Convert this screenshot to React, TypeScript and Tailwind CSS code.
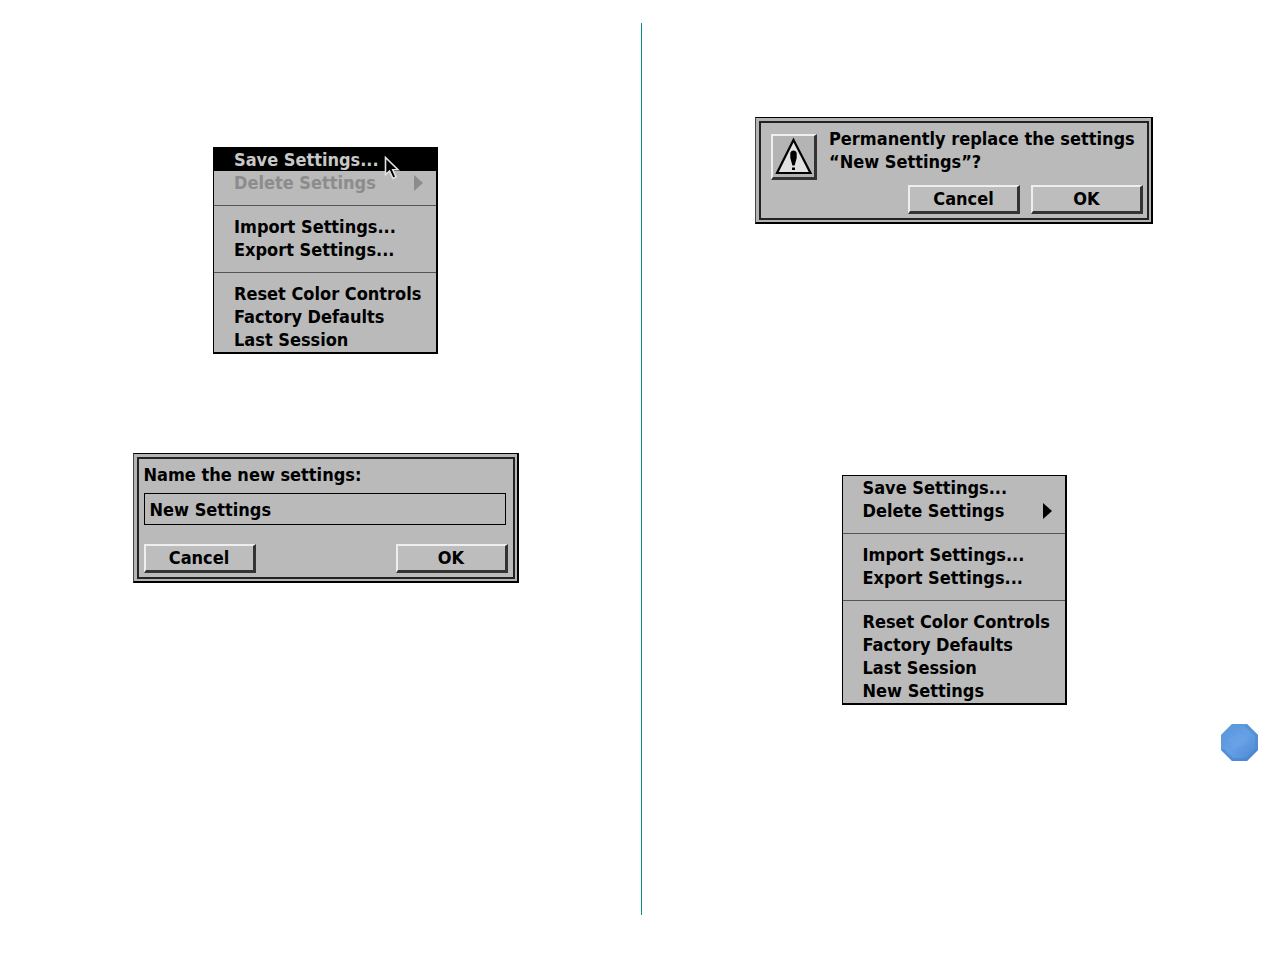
import type { ReactNode } from "react";

type Item = {
  label: string;
  selected?: boolean;
  disabled?: boolean;
  submenu?: boolean;
};

const fileItems: Item[] = [{ label: "Import Settings..." }, { label: "Export Settings..." }];
const presets: Item[] = [
  { label: "Reset Color Controls" },
  { label: "Factory Defaults" },
  { label: "Last Session" },
];

function Pointer() {
  return (
    <svg
      className="pointer-events-none absolute top-2 left-[170px] z-10"
      width="17"
      height="25"
      viewBox="0 0 17 25"
      aria-hidden="true"
    >
      <path
        d="M1.5 1.5V18.5L5.5 15L9 22.5L12 21L8.8 13.8H14Z"
        fill="#000"
        stroke="#e4e4e4"
        strokeWidth="1.6"
      />
    </svg>
  );
}

function Menu({ groups, children }: { groups: Item[][]; children?: ReactNode }) {
  return (
    <div
      role="menu"
      className="relative w-[225px] border-t border-r-2 border-b-2 border-l border-black bg-[#bababa] pb-px"
    >
      {groups.map((group, g) => (
        <div key={g} role="group">
          {g > 0 && (
            <div role="separator" className="pt-[11px] pb-[9px]">
              <div className="h-px bg-[#555]" />
            </div>
          )}
          {group.map((item) => (
            <button
              key={item.label}
              role="menuitem"
              type="button"
              disabled={item.disabled}
              className={`flex h-[23px] w-full items-center justify-between pr-[13px] pl-5 text-left leading-[23px] whitespace-nowrap ${
                item.selected ? "bg-black text-[#c8c8c8]" : item.disabled ? "text-[#8c8c8c]" : "text-black"
              }`}
            >
              {item.label}
              {item.submenu && (
                <svg width="9" height="16" viewBox="0 0 9 16" aria-hidden="true">
                  <path d="M0 0L9 8L0 16Z" fill="currentColor" />
                </svg>
              )}
            </button>
          ))}
        </div>
      ))}
      {children}
    </div>
  );
}

function Dialog({ className, children }: { className: string; children: ReactNode }) {
  return (
    <div
      role="dialog"
      className={`border-t border-r-2 border-b-2 border-l border-t-black border-r-black border-b-black border-l-[#444] bg-[#b4b4b4] pt-[3px] pr-0.5 pb-0.5 pl-[3px] ${className}`}
    >
      <div className="border-2 border-[#222] bg-[#bababa]">{children}</div>
    </div>
  );
}

function PushButton({ children }: { children: ReactNode }) {
  return (
    <button
      type="button"
      className="h-[29px] w-[112px] border-t-2 border-r-3 border-b-3 border-l-2 border-t-[#eee] border-r-[#333] border-b-[#333] border-l-[#eee] bg-[#bdbdbd] text-center leading-6"
    >
      {children}
    </button>
  );
}

function Alert() {
  return (
    <div className="mt-[11px] h-[46px] w-[46px] shrink-0 border-t-2 border-r-3 border-b-3 border-l-2 border-t-[#eee] border-r-[#333] border-b-[#333] border-l-[#eee] bg-[#b4b4b4]">
      <svg width="41" height="41" viewBox="0 0 41 41" role="img" aria-label="Caution">
        <path d="M20.5 4L37.5 37H4Z" fill="#e2e2e2" stroke="#000" strokeWidth="2.2" />
        <path d="M17.3 17.5C17.3 13.5 23.7 13.5 23.7 17.5V22L21.6 29.5H19.4L17.3 22Z" fill="#000" />
        <rect x="19" y="31.5" width="3" height="2.5" fill="#000" />
      </svg>
    </div>
  );
}

function Octagon() {
  return (
    <svg width="37" height="37" viewBox="0 0 37 37" aria-hidden="true">
      <defs>
        <linearGradient id="gem" x1="0" y1="0" x2="1" y2="1">
          <stop offset="0" stopColor="#5a94da" />
          <stop offset="0.5" stopColor="#659fe6" />
          <stop offset="1" stopColor="#4a86d0" />
        </linearGradient>
      </defs>
      <path d="M11 0H26L37 11V26L26 37H11L0 26V11Z" fill="url(#gem)" />
      <path d="M11 0H26L24 3H12L3 12V25L0 26V11Z" fill="#5b9bd6" opacity="0.5" />
      <path d="M26 0L37 11V26L34 25V12L24 3Z" fill="#4a85cd" opacity="0.5" />
      <path d="M37 26L26 37H11L0 26L3 25L12 34H25L34 25Z" fill="#4380cc" opacity="0.5" />
      <path d="M7 15L18 9L29 15L24 21L12 25Z" fill="#7bb0f0" opacity="0.2" />
    </svg>
  );
}

export default function App() {
  return (
    <main className="grid min-h-screen grid-cols-[1fr_1px_1fr] bg-white pt-[23px] pb-[45px] pl-[3px] font-['DejaVu_Sans_Condensed','DejaVu_Sans',sans-serif] text-[18px] font-bold text-black">
      <section className="flex flex-col items-center gap-[99px] pt-[124px] pl-[7px]">
        <Menu
          groups={[
            [
              { label: "Save Settings...", selected: true },
              { label: "Delete Settings", disabled: true, submenu: true },
            ],
            fileItems,
            presets,
          ]}
        >
          <Pointer />
        </Menu>
        <Dialog className="w-[386px]">
          <form className="px-[5px] pb-1" onSubmit={(e) => e.preventDefault()}>
            <label htmlFor="name" className="block leading-8">
              Name the new settings:
            </label>
            <div className="pt-0.5 pr-0.5">
              <input
                id="name"
                defaultValue="New Settings"
                className="block h-8 w-full border border-black bg-[#bababa] px-[5px] outline-none"
              />
            </div>
            <div className="mt-[19px] flex justify-between">
              <PushButton>Cancel</PushButton>
              <PushButton>OK</PushButton>
            </div>
          </form>
        </Dialog>
      </section>

      <div className="bg-[#009080]" />

      <section className="flex flex-col items-center pt-[94px] pr-[14px]">
        <Dialog className="w-[398px]">
          <div className="flex gap-3 pr-1 pb-1 pl-2.5">
            <Alert />
            <div className="flex flex-1 flex-col gap-3 pt-1">
              <p className="leading-[23px] whitespace-nowrap">
                Permanently replace the settings
                <br />
                “New Settings”?
              </p>
              <div className="flex justify-end gap-[11px]">
                <PushButton>Cancel</PushButton>
                <PushButton>OK</PushButton>
              </div>
            </div>
          </div>
        </Dialog>
        <div className="mt-[251px]">
          <Menu
            groups={[
              [{ label: "Save Settings..." }, { label: "Delete Settings", submenu: true }],
              fileItems,
              [...presets, { label: "New Settings" }],
            ]}
          />
        </div>
        <button type="button" aria-label="Contents" className="mt-[19px] mr-2 self-end">
          <Octagon />
        </button>
      </section>
    </main>
  );
}
